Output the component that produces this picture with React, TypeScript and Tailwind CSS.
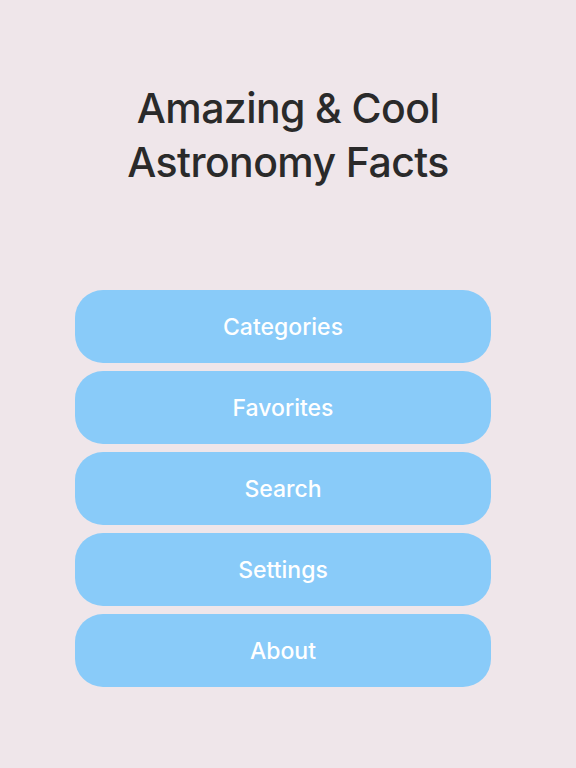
export default function App() {
  const items = ["Categories", "Favorites", "Search", "Settings", "About"];

  return (
    <div
      className="min-h-[768px] w-full bg-[#efe6ea] pt-[81px]"
      style={{ fontFamily: "Inter, 'Noto Sans', sans-serif" }}
    >
      <h1 className="text-center text-[41px] leading-[54px] font-medium text-[#2a2a2a] tracking-[-0.6px]">
        Amazing &amp; Cool
        <br />
        Astronomy Facts
      </h1>

      <div className="mt-[101px] ml-[75px] flex w-[416px] flex-col gap-[8px]">
        {items.map((label) => (
          <button
            key={label}
            className="flex h-[73px] items-center justify-center rounded-[28px] bg-[#89cbf9] pt-[2px] text-[23px] font-medium text-white"
          >
            {label}
          </button>
        ))}
      </div>
    </div>
  );
}
